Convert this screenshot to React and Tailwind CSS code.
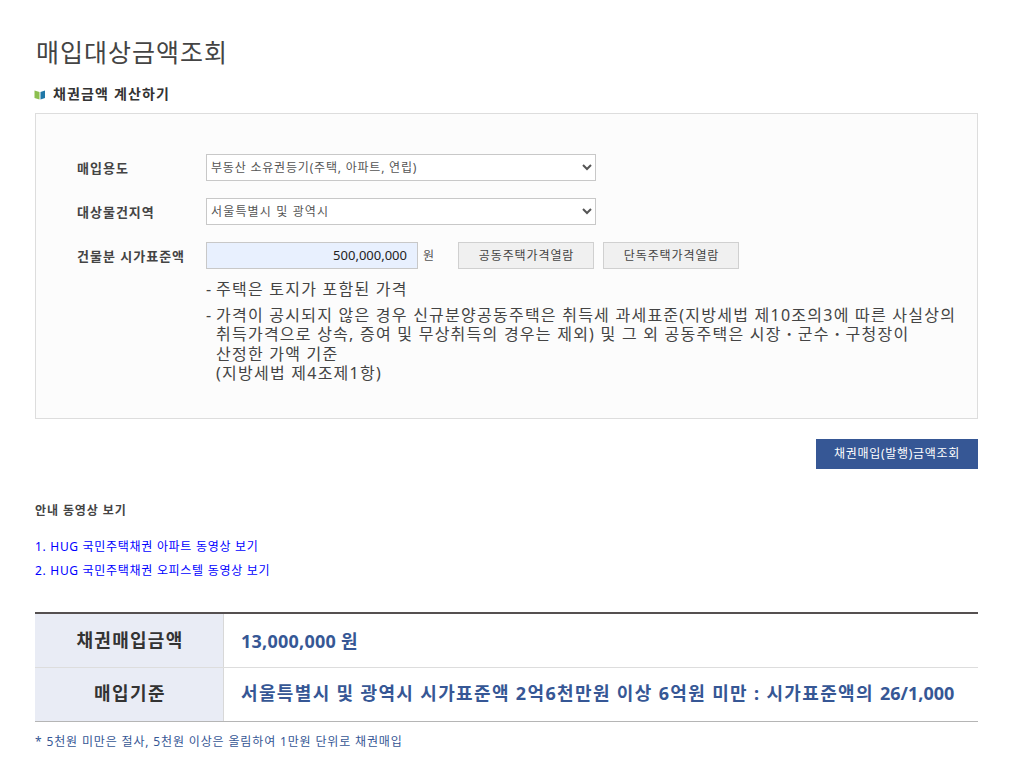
import React from "react";

function Row({ label, children, className = "" }) {
  return (
    <div className={`flex items-center ${className}`}>
      <div className="w-[129px] text-[13px] leading-[18px] tracking-[1px] font-bold text-[#444444]">{label}</div>
      {children}
    </div>
  );
}

function Sel({ value, className = "" }) {
  return (
    <select
      defaultValue={value}
      className={`w-[390px] h-[27px] border border-[#c8c8c8] bg-white pl-0 text-[12px] text-[#555555] outline-none ${className}`}
    >
      <option>{value}</option>
    </select>
  );
}

function GrayBtn({ children, className = "" }) {
  return (
    <button className={`h-[27px] w-[136px] border border-[#d0d0d0] bg-[#f0f0f0] pl-[1px] text-[12px] tracking-[0.9px] text-[#444444] ${className}`}>
      {children}
    </button>
  );
}

function Dot() {
  return <span className="font-bold">ㆍ</span>;
}

export default function App() {
  return (
    <div className="w-[1016px] h-[764px] overflow-hidden bg-white pl-[35px] pr-[38px] pt-[36px] font-['Noto_Sans','Noto_Sans_CJK_KR',sans-serif] text-[#333333]">
      <h1 className="pl-[1px] text-[25px] leading-[32px] font-normal tracking-[1px] text-[#444444]">매입대상금액조회</h1>

      <div className="mt-[16px] flex items-center h-[20px]">
        <svg width="12" height="11" viewBox="0 0 12 11" className="mr-[7px] -ml-[1px]">
          <path d="M0.5 1.5 L5.5 3 V10.5 L0.5 9 Z" fill="#8cbf4f" />
          <path d="M11 1.5 L6.5 3 V10.5 L11 9 Z" fill="#1f78a8" />
        </svg>
        <h2 className="text-[14px] leading-[18px] tracking-[1.15px] font-bold text-[#333333]">채권금액 계산하기</h2>
      </div>

      <div className="mt-[9px] h-[306px] border border-[#dddddd] bg-[#fcfcfc] pl-[41px] pt-[40px]">
        <Row label="매입용도">
          <Sel value="부동산 소유권등기(주택, 아파트, 연립)" className="tracking-[0.8px]" />
        </Row>
        <Row label="대상물건지역" className="mt-[17px]">
          <Sel value="서울특별시 및 광역시" className="tracking-[1.15px]" />
        </Row>
        <Row label="건물분 시가표준액" className="mt-[17px]">
          <div className="w-[212px] h-[27px] border border-[#c8c8c8] bg-[#e8f0fe] pr-[10px] text-right text-[13px] leading-[25px] text-[#222222]">
            500,000,000
          </div>
          <span className="ml-[5px] text-[12px] text-[#555555]">원</span>
          <GrayBtn className="ml-[24px]">공동주택가격열람</GrayBtn>
          <GrayBtn className="ml-[9px]">단독주택가격열람</GrayBtn>
        </Row>

        <ul className="mt-[11px] ml-[129px] w-[790px] text-[16px] leading-[19.2px] tracking-[1.24px] text-[#444444]">
          <li className="flex">
            <span className="w-[10px] shrink-0">-</span>
            <span>주택은 토지가 포함된 가격</span>
          </li>
          <li className="mt-[7px] flex">
            <span className="w-[10px] shrink-0">-</span>
            <span>
              가격이 공시되지 않은 경우 신규분양공동주택은 취득세 과세표준(지방세법 제10조의3에 따른 사실상의
              <br />
              취득가격으로 상속, 증여 및 무상취득의 경우는 제외) 및 그 외 공동주택은 시장<Dot />군수<Dot />구청장이
              <br />
              산정한 가액 기준
              <br />
              (지방세법 제4조제1항)
            </span>
          </li>
        </ul>
      </div>

      <div className="mt-[20px] flex justify-end">
        <button className="w-[162px] h-[30px] bg-[#365795] text-[12px] tracking-[0.7px] text-white">채권매입(발행)금액조회</button>
      </div>

      <p className="mt-[34px] text-[12px] leading-[16px] tracking-[0.9px] font-bold text-[#444444]">안내 동영상 보기</p>
      <div className="mt-[20px] flex flex-col gap-[8px] text-[12px] leading-[16px] tracking-[0.7px] text-[#0000ff]">
        <a>1. HUG 국민주택채권 아파트 동영상 보기</a>
        <a>2. HUG 국민주택채권 오피스텔 동영상 보기</a>
      </div>

      <div className="mt-[33px] border-t-2 border-b border-t-[#555050] border-b-[#b5b5b5]">
        <div className="flex h-[54px] border-b border-[#dddddd]">
          <div className="w-[189px] flex items-center justify-center border-r border-[#d8d8d8] bg-[#e9ecf5] pl-[2px] text-[18px] tracking-[1.3px] font-bold text-[#333333]">
            채권매입금액
          </div>
          <div className="flex items-center pl-[17px] pt-[2px] text-[18px] tracking-[0.25px] font-bold text-[#365795]">13,000,000 원</div>
        </div>
        <div className="flex h-[53px]">
          <div className="w-[189px] flex items-center justify-center border-r border-[#d8d8d8] bg-[#e9ecf5] pl-[2px] pb-[2px] text-[18px] tracking-[1.4px] font-bold text-[#333333]">
            매입기준
          </div>
          <div className="flex items-center pl-[17px] pb-[2px] text-[18px] font-bold text-[#365795]">
            <span className="tracking-[1.35px] whitespace-pre">서울특별시 및 광역시 시가표준액 2억6천만원 이상 6억원 미만 : 시가표준액의 </span>
            <span>26/1,000</span>
          </div>
        </div>
      </div>

      <p className="mt-[12px] text-[12px] leading-[16px] tracking-[0.85px] text-[#365795]">* 5천원 미만은 절사, 5천원 이상은 올림하여 1만원 단위로 채권매입</p>
    </div>
  );
}
